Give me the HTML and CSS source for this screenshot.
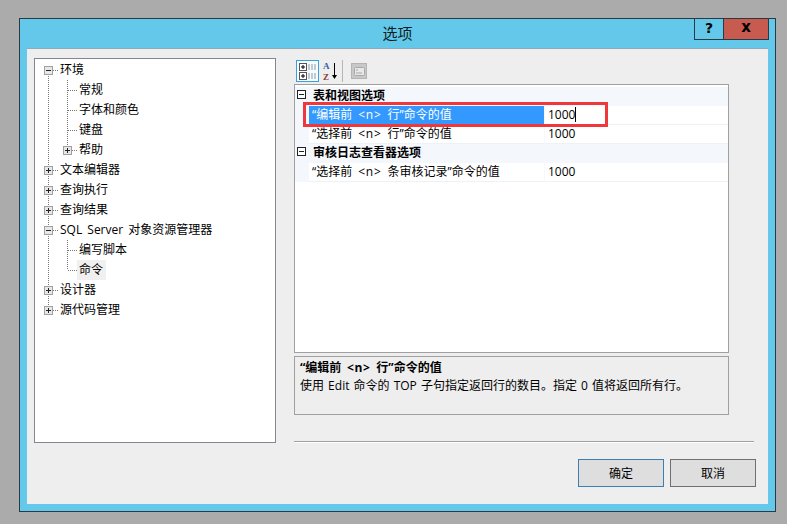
FILE: index.html
```html
<!DOCTYPE html>
<html lang="zh-CN">
<head>
    <meta charset="UTF-8">
    <title>选项</title>
    <link rel="stylesheet" href="styles.css">
</head>
<body>
    <div class="window">
        <div class="titlebar">
            <span></span>
            <span class="title">选项</span>
            <div class="caption">
                <span class="cap-help">?</span>
                <span class="cap-close">x</span>
            </div>
        </div>

        <div class="client">
            <div class="main">
                <div class="tree">
                    <div class="row"><span class="cell first"><i class="toggle minus"></i></span><span class="label">环境</span></div>
                    <div class="row"><span class="cell pipe"></span><span class="cell tee"></span><span class="label">常规</span></div>
                    <div class="row"><span class="cell pipe"></span><span class="cell tee"></span><span class="label">字体和颜色</span></div>
                    <div class="row"><span class="cell pipe"></span><span class="cell tee"></span><span class="label">键盘</span></div>
                    <div class="row"><span class="cell pipe"></span><span class="cell elbow"><i class="toggle plus"></i></span><span class="label">帮助</span></div>
                    <div class="row"><span class="cell tee"><i class="toggle plus"></i></span><span class="label">文本编辑器</span></div>
                    <div class="row"><span class="cell tee"><i class="toggle plus"></i></span><span class="label">查询执行</span></div>
                    <div class="row"><span class="cell tee"><i class="toggle plus"></i></span><span class="label">查询结果</span></div>
                    <div class="row"><span class="cell tee"><i class="toggle minus"></i></span><span class="label">SQL Server 对象资源管理器</span></div>
                    <div class="row"><span class="cell pipe"></span><span class="cell tee"></span><span class="label">编写脚本</span></div>
                    <div class="row"><span class="cell pipe"></span><span class="cell elbow"></span><span class="label selected">命令</span></div>
                    <div class="row"><span class="cell tee"><i class="toggle plus"></i></span><span class="label">设计器</span></div>
                    <div class="row"><span class="cell elbow"><i class="toggle plus"></i></span><span class="label">源代码管理</span></div>
                </div>

                <div class="panel">
                    <div class="toolbar">
                        <span class="tool active">
                            <svg width="21" height="20" viewBox="0 0 21 20">
                                <rect x="2.500" y="2.500" width="7" height="7" fill="#fff" stroke="#555"/>
                                <path d="M4 6h4M6 4v4" stroke="#000"/>
                                <rect x="2.500" y="11.500" width="7" height="7" fill="#fff" stroke="#555"/>
                                <path d="M4 15h4M6 13v4" stroke="#000"/>
                                <path d="M11 4h8M11 6h8M11 8h8M11 13h8M11 15h8M11 17h8" stroke="#8a99a8" stroke-dasharray="2 1"/>
                            </svg>
                        </span>
                        <span class="tool sort">
                            <svg width="17" height="20" viewBox="0 0 17 20">
                                <text class="az"><tspan x="1" y="8" class="a">A</tspan><tspan x="1" y="18.500" class="z">Z</tspan></text>
                                <path d="M12.500 2v13" stroke="#000"/>
                                <path d="M10 14h5l-2.500 4z" fill="#000"/>
                            </svg>
                        </span>
                        <span class="tool-sep"></span>
                        <span class="tool pages">
                            <svg width="16" height="16" viewBox="0 0 16 16">
                                <rect x="0.500" y="0.500" width="15" height="15" fill="#c8c8c8" stroke="#b4b4b4"/>
                                <rect x="3.500" y="4.500" width="10" height="8" rx="1" fill="#e8e8e8" stroke="#a8a8a8"/>
                                <path d="M5 7h2M5 10h6" stroke="#a8a8a8"/>
                            </svg>
                        </span>
                    </div>

                    <div class="grid">
                        <div class="group"><i class="toggle flat minus"></i><span>表和视图选项</span></div>
                        <div class="prop">
                            <span class="name on">“编辑前 <span class="tag">&lt;n&gt;</span> 行”命令的值</span>
                            <span class="value">1000<i class="caret"></i></span>
                        </div>
                        <div class="prop">
                            <span class="name">“选择前 <span class="tag">&lt;n&gt;</span> 行”命令的值</span>
                            <span class="value">1000</span>
                        </div>
                        <div class="group"><i class="toggle flat minus"></i><span>审核日志查看器选项</span></div>
                        <div class="prop">
                            <span class="name">“选择前 <span class="tag">&lt;n&gt;</span> 条审核记录”命令的值</span>
                            <span class="value">1000</span>
                        </div>
                        <div class="marker"></div>
                    </div>

                    <div class="help">
                        <div class="help-title">“编辑前 <span class="tag">&lt;n&gt;</span> 行”命令的值</div>
                        <div class="help-text">使用 Edit 命令的 TOP 子句指定返回行的数目。指定 0 值将返回所有行。</div>
                    </div>

                    <div class="divider"></div>
                </div>
            </div>

            <div class="buttons">
                <button class="btn default">确定</button>
                <button class="btn">取消</button>
            </div>
        </div>
    </div>
</body>
</html>
```

FILE: styles.css
```css
body {
    margin: 0;
    background-color: #ababab;
    font-family: "Open Sans", "Noto Sans CJK SC", sans-serif;
    font-size: 12px;
    color: #000;
    overflow: hidden;
}

.window {
    box-sizing: border-box;
    width: 757px;
    height: 494px;
    margin: 18px 0 0 19px;
    padding: 0 7px 7px;
    background: #63c8ea;
    border: 1px solid #2b3a42;
    display: flex;
    flex-direction: column;
}

/* title bar */
.titlebar {
    height: 29px;
    flex: none;
    display: grid;
    grid-template-columns: 1fr auto 1fr;
}

.title {
    font-size: 15px;
    line-height: 29px;
    color: #101c22;
}

.caption {
    display: flex;
    justify-content: flex-end;
    height: 21px;
    margin-right: -1px;
}

.caption span {
    box-sizing: border-box;
    height: 21px;
    display: block;
    text-align: center;
    font-family: "DejaVu Sans", sans-serif;
    font-weight: bold;
    font-size: 14px;
    line-height: 18px;
    border: 1px solid #2b3a42;
    border-top: 0;
}

.cap-help {
    width: 29px;
    border-right: 0 !important;
}

.caption .cap-close {
    width: 46px;
    background: #c75b50;
    font-size: 15px;
    line-height: 16px;
}

/* dialog body */
.client {
    flex: 1;
    background: #eee;
    border-top: 1px solid #8fa9b8;
    display: flex;
    flex-direction: column;
    padding: 9px 12px 0 7px;
}

.main {
    display: flex;
    gap: 18px;
}

/* tree */
.tree {
    box-sizing: border-box;
    width: 242px;
    height: 385px;
    background: #fff;
    border: 1px solid #828790;
    padding: 1px 0 0 4px;
}

.row {
    height: 20px;
    display: flex;
    align-items: center;
}

.label {
    padding: 0 3px 0 2px;
    line-height: 20px;
    white-space: nowrap;
    word-spacing: 2px;
}

.selected {
    background: #f0f0f0;
}

.cell {
    width: 19px;
    height: 20px;
    flex: none;
    position: relative;
}

.cell::before,
.cell::after {
    content: "";
    position: absolute;
}

/* dotted guide lines */
.pipe::before,
.tee::before,
.elbow::before,
.first::before {
    left: 9px;
    width: 1px;
    background: repeating-linear-gradient(to bottom, #777 0 1px, transparent 1px 2px);
}

.pipe::before,
.tee::before {
    top: 0;
    bottom: 0;
}

.elbow::before {
    top: 0;
    height: 10px;
}

.first::before {
    top: 10px;
    bottom: 0;
}

.tee::after,
.elbow::after,
.first::after {
    left: 10px;
    top: 10px;
    width: 9px;
    height: 1px;
    background: repeating-linear-gradient(to right, #777 0 1px, transparent 1px 2px);
}

.toggle {
    position: absolute;
    left: 5px;
    top: 6px;
    z-index: 1;
    box-sizing: border-box;
    width: 9px;
    height: 9px;
    background: #e8e8e8;
    border: 1px solid #a0a0a0;
}

.toggle::before,
.toggle::after {
    content: "";
    position: absolute;
    background: #222;
}

.toggle::before {
    left: 1px;
    top: 3px;
    width: 5px;
    height: 1px;
}

.plus::after {
    left: 3px;
    top: 1px;
    width: 1px;
    height: 5px;
}

/* right panel */
.panel {
    width: 460px;
    display: flex;
    flex-direction: column;
}

.toolbar {
    height: 26px;
    display: flex;
    align-items: flex-start;
    padding-left: 2px;
    box-sizing: border-box;
    padding-top: 2px;
}

.tool {
    display: block;
    line-height: 0;
}

.active {
    box-sizing: border-box;
    width: 23px;
    height: 22px;
    background: #f6fbfe;
    border: 1px solid #3aa0dc;
}

.sort {
    margin: 1px 0 0 3px;
}

.az {
    font-family: "Liberation Serif", serif;
    font-weight: bold;
    font-size: 9px;
}

.a {
    fill: #2f5fa8;
}

.z {
    fill: #8c3a3a;
}

.tool-sep {
    width: 1px;
    height: 22px;
    margin: 0 0 0 3px;
    background: #b5b5b5;
}

.pages {
    margin: 3px 0 0 8px;
}

.grid {
    box-sizing: border-box;
    width: 435px;
    height: 269px;
    background: #fff;
    border: 1px solid #a0a0a0;
    padding-top: 2px;
    position: relative;
}

.group {
    box-sizing: border-box;
    height: 19px;
    background: #f4f7fc;
    display: flex;
    align-items: center;
    font-weight: bold;
    position: relative;
    padding: 0 0 2px 18px;
    line-height: 17px;
}

.flat {
    left: 2px;
    top: 3px;
    background: #fff;
    border-color: #222;
}

.prop {
    height: 19px;
    display: flex;
    line-height: 18px;
    background: #f4f7fc;
    padding-left: 14px;
}

.name {
    box-sizing: border-box;
    width: 235px;
    flex: none;
    padding-left: 3px;
    background: #fff;
    border-bottom: 1px solid #eef1f6;
    white-space: nowrap;
    word-spacing: 3px;
}

.tag {
    letter-spacing: 0.7px;
}

.on {
    background: #3399ff;
    color: #fff;
    border-bottom: 0;
}

.value {
    flex: 1;
    box-sizing: border-box;
    margin-left: 1px;
    padding-left: 3px;
    background: #fff;
    border-bottom: 1px solid #eef1f6;
}

.caret {
    display: inline-block;
    width: 1px;
    height: 15px;
    background: #000;
    vertical-align: -3px;
}

/* red highlight drawn over the first row */
.marker {
    position: absolute;
    left: 8px;
    top: 17px;
    width: 299px;
    height: 19px;
    border: 3px solid #f0383c;
}

.help {
    box-sizing: border-box;
    width: 435px;
    height: 59px;
    margin-top: 3px;
    padding: 2px 5px;
    border: 1px solid #a0a0a0;
    line-height: 18px;
}

.help-title {
    font-weight: bold;
    word-spacing: 2.500px;
}

.help-text {
    word-spacing: 1px;
}

.divider {
    margin-top: 26px;
    height: 1px;
    background: #a0a0a0;
    border-bottom: 1px solid #fff;
}

/* ok / cancel */
.buttons {
    display: flex;
    justify-content: flex-end;
    gap: 6px;
    margin-top: 16px;
}

.btn {
    width: 86px;
    height: 28px;
    padding: 0;
    background: #dedede;
    border: 1px solid #707070;
    font: inherit;
    color: #000;
}

.default {
    border-color: #3c7fb1;
}
```
